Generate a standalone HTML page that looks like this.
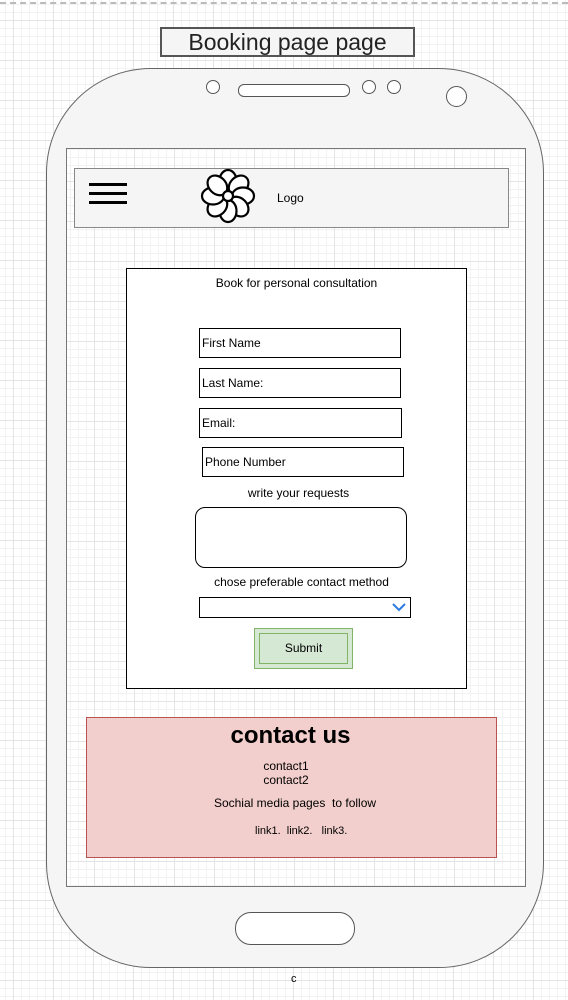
<!DOCTYPE html>
<html><head><style>
*{margin:0;padding:0;box-sizing:border-box}
body{width:568px;height:1000px;position:relative;overflow:hidden;font-family:"Liberation Sans",sans-serif;color:#000;
background-color:#fff;
background-image:linear-gradient(#e4e4e4 1px,transparent 1px),linear-gradient(90deg,#e4e4e4 1px,transparent 1px),linear-gradient(#f2f2f2 1px,transparent 1px),linear-gradient(90deg,#f2f2f2 1px,transparent 1px);
background-size:40px 40px,40px 40px,8px 8px,8px 8px;background-position:-27px -20px,-27px -20px,-27px -20px,-27px -20px}
.a{position:absolute}
.dash{left:0;top:2px;width:568px;border-top:2px dashed #bbb}
.title{left:160px;top:27px;width:255px;height:30px;border:2px solid #555;background:#f5f5f5;font-size:23px;text-align:center;line-height:26px;color:#222}
.phone{left:46px;top:68px;width:498px;height:900px;border:1px solid #666;border-radius:105px;background:#f5f5f5}
.circ{border:1px solid #555;border-radius:50%;background:#fff}
.screen{left:66px;top:148px;width:460px;height:739px;border:1px solid #777;
background-image:linear-gradient(#e4e4e4 1px,transparent 1px),linear-gradient(90deg,#e4e4e4 1px,transparent 1px),linear-gradient(#f2f2f2 1px,transparent 1px),linear-gradient(90deg,#f2f2f2 1px,transparent 1px);
background-size:40px 40px,40px 40px,8px 8px,8px 8px;background-position:-93px -168px,-93px -168px,-93px -168px,-93px -168px;background-color:#fff}
.hdr{left:74px;top:168px;width:435px;height:60px;border:1px solid #888;background:#f5f5f5}
.bar{left:89px;width:38px;height:3px;background:#000}
.form{left:126px;top:268px;width:341px;height:421px;border:1px solid #000;background:#fff;font-size:12px}
.in{border:1px solid #000;background:#fff;font-size:12px;padding-left:2px;line-height:28px}
.t{font-size:12px;text-align:center}
</style></head><body>
<div class="a dash"></div>
<div class="a title">Booking page page</div>
<div class="a phone"></div>
<div class="a circ" style="left:206px;top:80px;width:14px;height:14px"></div>
<div class="a" style="left:238px;top:84px;width:112px;height:13px;border:1px solid #555;border-radius:6px;background:#fff"></div>
<div class="a circ" style="left:362px;top:80px;width:14px;height:14px"></div>
<div class="a circ" style="left:387px;top:80px;width:14px;height:14px"></div>
<div class="a circ" style="left:446px;top:86px;width:21px;height:21px"></div>
<div class="a screen"></div>
<div class="a hdr"></div>
<div class="a bar" style="top:183px"></div>
<div class="a bar" style="top:192px"></div>
<div class="a bar" style="top:201px"></div>
<svg class="a" style="left:199px;top:168px" width="60" height="60" viewBox="0 0 60 60">
<g fill="#fff" stroke="#000" stroke-width="2.2">
<g transform="translate(29,28)">
<ellipse cx="0" cy="-15" rx="8.5" ry="11" transform="rotate(0)"/>
<ellipse cx="0" cy="-15" rx="8.5" ry="11" transform="rotate(45)"/>
<ellipse cx="0" cy="-15" rx="8.5" ry="11" transform="rotate(90)"/>
<ellipse cx="0" cy="-15" rx="8.5" ry="11" transform="rotate(135)"/>
<ellipse cx="0" cy="-15" rx="8.5" ry="11" transform="rotate(180)"/>
<ellipse cx="0" cy="-15" rx="8.5" ry="11" transform="rotate(225)"/>
<ellipse cx="0" cy="-15" rx="8.5" ry="11" transform="rotate(270)"/>
<ellipse cx="0" cy="-15" rx="8.5" ry="11" transform="rotate(315)"/>
<circle r="5"/>
</g></g></svg>
<div class="a" style="left:277px;top:191px;font-size:12px">Logo</div>
<div class="a form"></div>
<div class="a t" style="left:126px;top:276px;width:341px">Book for personal consultation</div>
<div class="a in" style="left:199px;top:328px;width:202px;height:30px">First Name</div>
<div class="a in" style="left:199px;top:368px;width:202px;height:30px">Last Name:</div>
<div class="a in" style="left:199px;top:408px;width:203px;height:30px">Email:</div>
<div class="a in" style="left:202px;top:447px;width:202px;height:30px">Phone Number</div>
<div class="a t" style="left:128px;top:486px;width:341px">write your requests</div>
<div class="a" style="left:195px;top:507px;width:212px;height:61px;border:1px solid #000;border-radius:10px;background:#fff"></div>
<div class="a t" style="left:131px;top:575px;width:341px">chose preferable contact method</div>
<div class="a" style="left:199px;top:597px;width:212px;height:21px;border:1px solid #000;background:#fff"></div>
<svg class="a" style="left:392px;top:602px" width="14" height="10"><path d="M1 2 L7 8 L13 2" fill="none" stroke="#2a7ae2" stroke-width="2"/></svg>
<div class="a" style="left:254px;top:628px;width:99px;height:41px;border:1px solid #82b366;background:#d5e8d4"></div>
<div class="a" style="left:259px;top:633px;width:89px;height:31px;border:1px solid #82b366"></div>
<div class="a t" style="left:254px;top:641px;width:99px">Submit</div>
<div class="a" style="left:86px;top:717px;width:411px;height:141px;background:#f2cfcc;border:1px solid #b85450"></div>
<div class="a" style="left:85px;top:722px;width:411px;text-align:center;font-size:24px;font-weight:bold">contact us</div>
<div class="a t" style="left:86px;top:759px;width:400px;line-height:14px">contact1<br>contact2</div>
<div class="a t" style="left:86px;top:796px;width:418px">Sochial media pages&nbsp; to follow</div>
<div class="a t" style="left:255px;top:825px;font-size:11px">link1.&nbsp; link2.&nbsp;&nbsp; link3.</div>
<div class="a" style="left:235px;top:912px;width:120px;height:33px;border:1px solid #555;border-radius:16px;background:#fff"></div>
<div class="a" style="left:291px;top:973px;font-size:11px">c</div>
</body></html>
